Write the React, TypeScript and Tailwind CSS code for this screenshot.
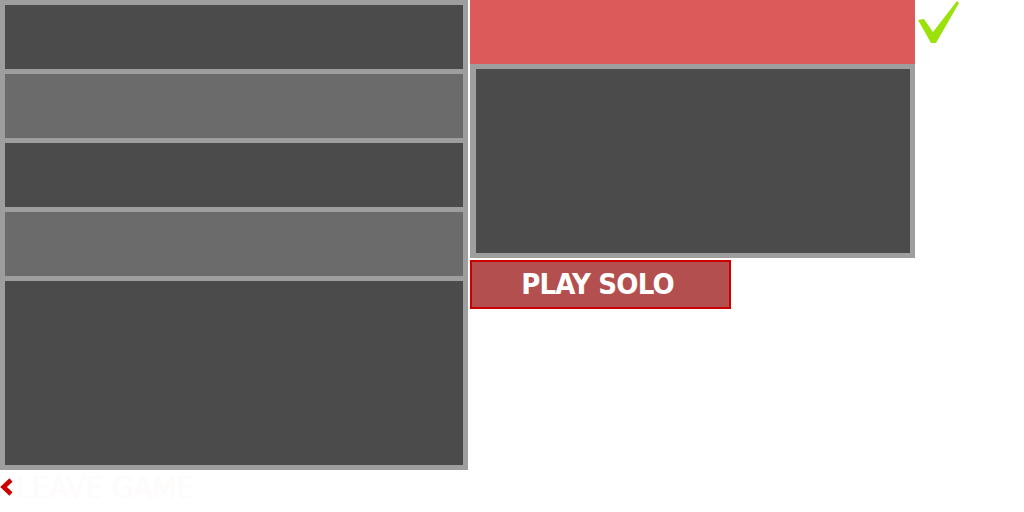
import React from "react";

export default function App() {
  return (
    <div className="w-[1024px] h-[512px] bg-white relative overflow-hidden" style={{ fontFamily: '"DejaVu Sans", sans-serif' }}>
      <div className="flex gap-[2px] items-start">
        <div className="w-[468px] h-[470px] bg-[#9e9e9e] p-[5px] flex flex-col gap-[5px]">
          <div className="h-[64px] bg-[#4b4b4b]" />
          <div className="h-[64px] bg-[#6b6b6b]" />
          <div className="h-[64px] bg-[#4b4b4b]" />
          <div className="h-[64px] bg-[#6b6b6b]" />
          <div className="flex-1 bg-[#4b4b4b]" />
        </div>
        <div className="flex flex-col">
          <div className="flex items-start">
            <div className="w-[445px] h-[64px] bg-[#dc5a5a]" />
            <svg width="48" height="46" viewBox="0 0 48 46" className="ml-[1px]">
              <path d="M2 20 L8 19 L17 32 L41 1 L43 3 L20 43 L15 43 Z" fill="#9be10a" />
            </svg>
          </div>
          <div className="w-[445px] h-[194px] bg-[#9e9e9e] pl-[6px] pr-[5px] py-[5px]">
            <div className="w-full h-full bg-[#4b4b4b]" />
          </div>
          <button className="mt-[2px] w-[261px] h-[49px] bg-[#b34f4f] border-2 border-[#cc0000] flex items-center justify-center text-white font-bold text-[29px] tracking-[-0.8px] leading-none pr-[6px]" style={{ fontFamily: '"DejaVu Sans Condensed", "DejaVu Sans", sans-serif', fontStretch: "condensed" }}>
            PLAY SOLO
          </button>
        </div>
      </div>
      <div className="flex items-center h-[30px] mt-[2px]">
        <svg width="14" height="18" viewBox="0 0 14 18" className="ml-[0px]">
          <path d="M11 2 L3.5 9 L11 16" fill="none" stroke="#cc0000" strokeWidth="4.5" />
        </svg>
        <span className="ml-[2px] text-[31px] leading-none text-[#fefbfb]" style={{ fontFamily: '"DejaVu Sans Condensed", "DejaVu Sans", sans-serif', fontWeight: 200, fontStretch: "condensed" }}>
          LEAVE GAME
        </span>
      </div>
    </div>
  );
}
